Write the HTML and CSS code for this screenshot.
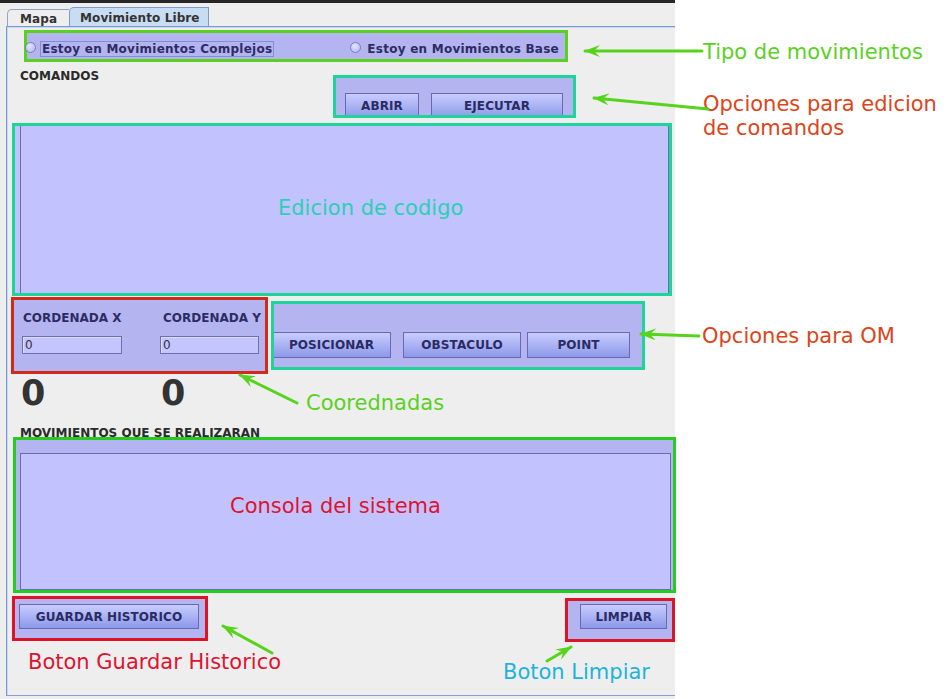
FILE: index.html
```html
<!DOCTYPE html>
<html lang="es">
<head>
<meta charset="utf-8">
<title>Movimiento Libre</title>
<link rel="stylesheet" href="styles.css">
</head>
<body>
<div class="page">
  <div class="window">
    <div class="topbar"></div>
    <div class="tabs">
      <div class="tab tab-plain">Mapa</div>
      <div class="tab tab-active">Movimiento Libre</div>
    </div>
    <div class="panel">
      <div class="radios">
        <div class="radio radio-first"><span class="radio-dot"></span><span class="radio-text focused">Estoy en Movimientos Complejos</span></div>
        <div class="radio"><span class="radio-dot"></span><span class="radio-text">Estoy en Movimientos Base</span></div>
      </div>
      <div class="commands-row">
        <div class="section-label cmd-label">COMANDOS</div>
        <div class="cmd-box">
          <button class="btn btn-abrir">ABRIR</button>
          <button class="btn btn-ejecutar">EJECUTAR</button>
        </div>
      </div>
      <div class="code-box"><div class="code-area"></div></div>
      <div class="coords-row">
        <div class="coords-box">
          <div class="coord-col">
            <div class="coord-label">CORDENADA X</div>
            <div class="coord-input">0</div>
          </div>
          <div class="coord-col col-y">
            <div class="coord-label">CORDENADA Y</div>
            <div class="coord-input">0</div>
          </div>
        </div>
        <div class="om-box">
          <button class="btn btn-posicionar">POSICIONAR</button>
          <button class="btn btn-obstaculo">OBSTACULO</button>
          <button class="btn btn-point">POINT</button>
        </div>
      </div>
      <div class="zeros"><span class="zero zero-x">0</span><span class="zero">0</span></div>
      <div class="section-label moves-label">MOVIMIENTOS QUE SE REALIZARAN</div>
      <div class="console-box"><div class="console-area"></div></div>
      <div class="bottom-row">
        <div class="save-box"><button class="btn btn-save">GUARDAR HISTORICO</button></div>
        <div class="clear-box"><button class="btn btn-clear">LIMPIAR</button></div>
      </div>
    </div>
  </div>

  <div class="ann ann-green ann-tipo">Tipo de movimientos</div>
  <div class="ann ann-orange ann-cmd">Opciones para edicion<br>de comandos</div>
  <div class="ann ann-teal ann-code">Edicion de codigo</div>
  <div class="ann ann-orange ann-om">Opciones para OM</div>
  <div class="ann ann-green ann-coords">Coorednadas</div>
  <div class="ann ann-red ann-console">Consola del sistema</div>
  <div class="ann ann-red ann-save">Boton Guardar Historico</div>
  <div class="ann ann-cyan ann-clear">Boton Limpiar</div>

  <svg class="arrows" width="951" height="699" viewBox="0 0 951 699" xmlns="http://www.w3.org/2000/svg">
    <defs>
      <marker id="ah" viewBox="0 0 16 12" refX="1" refY="6" markerWidth="16" markerHeight="12" orient="auto" markerUnits="userSpaceOnUse">
        <path d="M0 6 L16 0 L10 6 L16 12 Z" fill="#56d41b"/>
      </marker>
    </defs>
    <g stroke="#56d41b" stroke-width="3" stroke-linecap="round" fill="none">
      <line x1="585" y1="51" x2="702" y2="51" marker-start="url(#ah)"/>
      <line x1="594" y1="98" x2="708" y2="109" marker-start="url(#ah)"/>
      <line x1="641" y1="334" x2="699" y2="336" marker-start="url(#ah)"/>
      <line x1="240" y1="375" x2="297" y2="403" marker-start="url(#ah)"/>
      <line x1="223" y1="626" x2="272" y2="653" marker-start="url(#ah)"/>
      <line x1="571" y1="647" x2="547" y2="661" marker-start="url(#ah)"/>
    </g>
  </svg>
</div>
</body>
</html>
```

FILE: styles.css
```css
* { box-sizing: border-box; }
html, body { margin: 0; padding: 0; }
body { background: #ffffff; font-family: "DejaVu Sans", "Noto Sans", sans-serif; }

.page { position: relative; width: 951px; height: 699px; overflow: hidden; background: #ffffff; }
.window { width: 675px; height: 699px; background: #eeeeee; }
.topbar { width: 675px; height: 3px; background: #262626; }

.tabs { display: flex; align-items: flex-end; height: 19px; margin-top: 4px; padding-left: 7px; }
.tab { font-size: 12px; font-weight: bold; line-height: 14px; color: #333333; white-space: nowrap; letter-spacing: 0.1px; }
.tab-plain { width: 62px; height: 17px; padding: 2px 0 0 12px; border: 1px solid #8ea4c8; border-right: none; border-bottom: none; border-top-left-radius: 5px; background: #eeeeee; }
.tab-active { width: 140px; height: 19px; padding: 3px 0 0 10px; border: 1px solid #7b9bd0; border-bottom: none; border-top-left-radius: 5px; background: #c9ddf2; }

.panel { width: 669px; height: 670px; margin-left: 6px; border-top: 1px solid #7b9bd0; border-left: 1px solid #7b9bd0; border-bottom: 1px solid #8aa0c8; box-shadow: inset 1px 1px 0 #c6d8f0; }

.radios { display: flex; justify-content: space-between; align-items: flex-start; width: 544px; height: 32px; margin: 3px 0 0 17px; padding: 8px 4px 0 0; border: 3px solid #5ad11f; background: #b4b4f0; }
.radio { display: flex; align-items: flex-start; gap: 4px; }
.radio-first { margin-left: -2px; }
.radio-dot { width: 11px; height: 11px; margin-top: 1px; border-radius: 50%; border: 1px solid #7c7cb8; background: radial-gradient(circle at 40% 35%, #e2e5ff, #aeb4f0); }
.radio-text { font-size: 12px; font-weight: bold; line-height: 14px; letter-spacing: 0.25px; color: #2c2c62; padding: 0 1px; border: 1px solid transparent; white-space: nowrap; }
.focused { border-color: #7f8fd6; }

.section-label { font-size: 12px; font-weight: bold; line-height: 14px; color: #2a2a2a; white-space: nowrap; }
.commands-row { display: flex; align-items: flex-start; }
.cmd-label { width: 313px; margin: 7px 0 0 13px; }
.cmd-box { display: flex; gap: 12px; width: 243px; height: 43px; margin-top: 13px; padding: 15px 0 0 9px; border: 3px solid #1dd59a; background: #b4b4f0; overflow: hidden; }

.btn { flex: none; height: 26px; padding: 0; border: 1px solid #6868b4; background: linear-gradient(#c8ccff, #8c99e8); font-family: "DejaVu Sans", sans-serif; font-size: 12px; font-weight: bold; line-height: 14px; letter-spacing: 0.1px; color: #2b2b63; text-align: center; white-space: nowrap; }
.btn-abrir { width: 74px; }
.btn-ejecutar { width: 132px; }

.code-box { display: flex; width: 660px; height: 173px; margin: 5px 0 0 5px; border: 3px solid #1dd59a; background: #c2c2ff; }
.code-area { flex: 1; margin-left: 5px; border-left: 1px solid #6a6ab8; border-right: 1px solid #6a6ab8; }

.coords-row { display: flex; align-items: flex-start; margin-top: 1px; }
.coords-box { display: flex; width: 257px; height: 77px; margin-left: 4px; padding: 11px 0 0 8px; border: 3px solid #d22a1a; background: #b4b4f0; }
.coord-col { width: 100px; }
.col-y { width: 99px; margin-left: 38px; }
.coord-label { margin-left: 1px; font-size: 12px; font-weight: bold; line-height: 14px; color: #2c2c62; white-space: nowrap; }
.col-y .coord-label { margin-left: 3px; }
.coord-input { height: 18px; margin-top: 11px; padding-left: 2px; border: 1px solid #6a70b0; background: #c4c4ff; box-shadow: inset 1px 1px 0 #dcdcff; font-size: 12px; line-height: 16px; color: #333333; }

.om-box { display: flex; width: 374px; height: 69px; margin: 4px 0 0 3px; padding-top: 28px; border: 3px solid #1dd59a; background: #b4b4f0; overflow: hidden; }
.btn-posicionar { width: 119px; margin-left: -2px; }
.btn-obstaculo { width: 118px; margin-left: 12px; }
.btn-point { width: 103px; margin-left: 6px; }

.zeros { display: flex; height: 34px; margin-top: 2px; }
.zero { width: 140px; font-size: 35px; font-weight: bold; line-height: 34px; color: #333333; }
.zero-x { margin-left: 14px; }

.moves-label { height: 11px; margin: 16px 0 0 13px; overflow: hidden; }

.console-box { width: 663px; height: 156px; margin-left: 6px; padding: 13px 0 0 4px; border: 3px solid #23cc1f; background: #b4b4f0; }
.console-area { width: 651px; height: 137px; border: 1px solid #6a6ab8; background: #c2c2ff; }

.bottom-row { display: flex; align-items: flex-start; margin-top: 3px; }
.save-box { width: 201px; height: 45px; margin-left: 5px; padding: 5px 0 0 4px; border: 3px solid #dc1426; background: #b4b4f0; }
.btn-save { width: 180px; height: 25px; }
.clear-box { width: 112px; height: 44px; margin: 2px 0 0 357px; padding: 3px 0 0 12px; border: 3px solid #dc1426; background: #b4b4f0; }
.btn-clear { width: 87px; height: 25px; }

.ann { position: absolute; font-family: "DejaVu Sans", sans-serif; font-size: 21px; line-height: 24px; white-space: nowrap; }
.ann-green { color: #5ad11f; }
.ann-orange { color: #dd4418; }
.ann-teal { color: #2ad0b4; }
.ann-red { color: #dd1430; }
.ann-cyan { color: #1cb4dc; }
.ann-tipo { left: 703px; top: 40px; }
.ann-cmd { left: 703px; top: 92px; }
.ann-code { left: 278px; top: 196px; }
.ann-om { left: 702px; top: 324px; }
.ann-coords { left: 306px; top: 391px; }
.ann-console { left: 230px; top: 494px; }
.ann-save { left: 28px; top: 650px; }
.ann-clear { left: 503px; top: 660px; }

.arrows { position: absolute; left: 0; top: 0; pointer-events: none; }
```
